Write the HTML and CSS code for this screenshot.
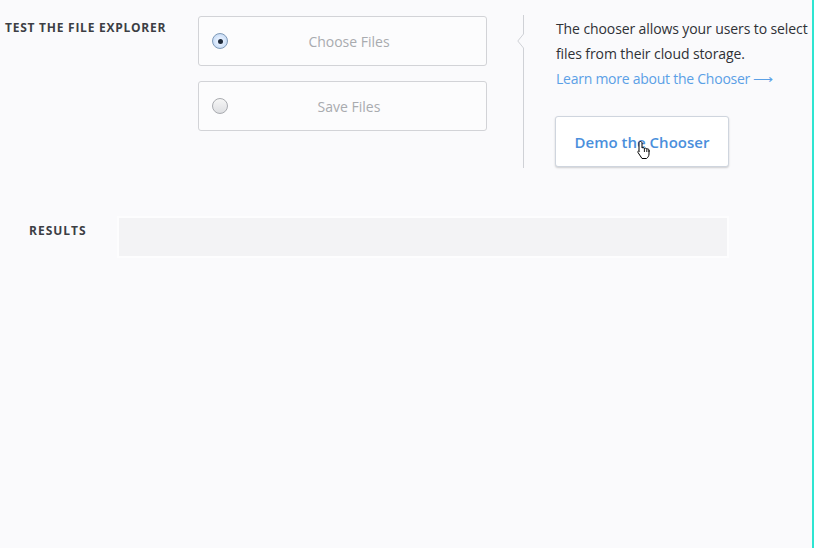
FILE: index.html
```html
<!DOCTYPE html>
<html>
<head>
<meta charset="utf-8">
<link rel="stylesheet" href="styles.css">
</head>
<body>
<div class="page">
  <section class="explorer">
    <div class="section-label">Test the File Explorer</div>
    <div class="options">
      <label class="option">
        <span class="radio radio-on"><span class="dot"></span></span>
        <span class="option-text">Choose Files</span>
      </label>
      <label class="option">
        <span class="radio"></span>
        <span class="option-text">Save Files</span>
      </label>
    </div>
    <svg class="divider" width="8" height="153" viewBox="0 0 8 153">
      <path d="M6.5 0 V19 L0.8 26 L6.5 33 V153" fill="none" stroke="#cfd1d6" stroke-width="1"/>
    </svg>
    <div class="desc">
      <p class="desc-text">The chooser allows your users to select files from their cloud storage.</p>
      <a class="desc-link" href="#">Learn more about the Chooser ⟶</a>
      <div class="btn-wrap">
        <button class="demo-btn">Demo the Chooser</button>
        <svg class="cursor" width="16" height="20" viewBox="0 0 16 20">
          <path d="M4.5 1.5 c0.8 0 1.5 0.6 1.5 1.4 V8 c0.3 -0.5 2.2 -0.5 2.4 0.5 c0.4 -0.6 2.2 -0.5 2.4 0.6 c0.5 -0.5 2.2 -0.3 2.2 1 V14 c0 2 -1.2 3.6 -2.5 4.5 H6 L2 12.5 c-0.6 -1 0.7 -2.2 1.5 -1.2 L3 10.5 V2.9 c0 -0.8 0.7 -1.4 1.5 -1.4 z" fill="#fff" stroke="#000" stroke-width="1"/>
          <path d="M8.4 8.6 V12 M10.8 9.2 V12 M13 10 V12" stroke="#000" stroke-width="0.9"/>
        </svg>
      </div>
    </div>
  </section>
  <section class="results">
    <div class="section-label results-label">Results</div>
    <div class="results-box"></div>
  </section>
</div>
</body>
</html>
```
FILE: styles.css
```css
html, body {
  margin: 0;
  padding: 0;
  background: #fafafc;
}
body {
  font-family: "Open Sans", "Liberation Sans", sans-serif;
  color: #333;
}
.page {
  min-height: 548px;
  box-sizing: border-box;
  border-right: 2px solid #2ee5d2;
  padding-top: 16px;
}
.explorer {
  display: flex;
  align-items: flex-start;
}
.section-label {
  font-size: 12px;
  font-weight: 700;
  text-transform: uppercase;
  letter-spacing: 0.75px;
  color: #3c3e44;
  flex-shrink: 0;
}
.explorer .section-label {
  width: 198px;
  padding-left: 5px;
  box-sizing: border-box;
  padding-top: 3px;
}
.options {
  width: 289px;
  flex-shrink: 0;
  display: flex;
  flex-direction: column;
  gap: 15px;
}
.option {
  height: 50px;
  box-sizing: border-box;
  border: 1px solid #d2d3d7;
  border-radius: 3px;
  background: #fcfcfd;
  display: flex;
  align-items: center;
  padding-left: 13px;
}
.radio {
  width: 14px;
  height: 14px;
  border-radius: 50%;
  border: 1px solid #a9abb0;
  background: linear-gradient(#f6f6f6, #dedfe2);
  display: flex;
  align-items: center;
  justify-content: center;
  flex-shrink: 0;
}
.radio-on {
  border-color: #7f9ab8;
  background: radial-gradient(circle, #e4efff 30%, #b7d0ee 100%);
}
.dot {
  width: 5px;
  height: 5px;
  border-radius: 50%;
  background: #1e2a3a;
}
.option-text {
  flex: 1;
  text-align: center;
  font-size: 14px;
  color: #a9abaf;
  padding-right: 16px;
}
.divider {
  margin-left: 30px;
  margin-top: -1px;
  flex-shrink: 0;
}
.desc {
  margin-left: 31px;
  flex: 1;
  min-width: 0;
}
.desc-text {
  margin: 0;
  font-size: 14px;
  line-height: 25px;
  color: #2f3136;
  letter-spacing: -0.1px;
}
.desc-link {
  display: block;
  font-size: 14px;
  line-height: 25px;
  color: #5aa0e6;
  text-decoration: none;
  letter-spacing: -0.25px;
}
.btn-wrap {
  position: relative;
  margin-top: 25px;
  width: 174px;
}
.demo-btn {
  display: block;
  width: 174px;
  height: 51px;
  margin-left: -1px;
  border: 1px solid #cfd5de;
  border-radius: 3px;
  background: #fff;
  box-shadow: 0 1px 2px rgba(0, 0, 0, 0.18);
  font-family: "Open Sans", "Liberation Sans", sans-serif;
  font-weight: 600;
  font-size: 15px;
  color: #4a8fdc;
  padding: 0;
}
.cursor {
  position: absolute;
  left: 80px;
  top: 24px;
}
.results {
  display: flex;
  align-items: flex-start;
  margin-top: 50px;
}
.results-label {
  width: 119px;
  padding-left: 29px;
  box-sizing: border-box;
  padding-top: 4px;
  letter-spacing: 1px;
}
.results-box {
  width: 608px;
  height: 38px;
  background: #f3f3f5;
  box-shadow: 0 0 0 2px #fdfdfe;
}
```
